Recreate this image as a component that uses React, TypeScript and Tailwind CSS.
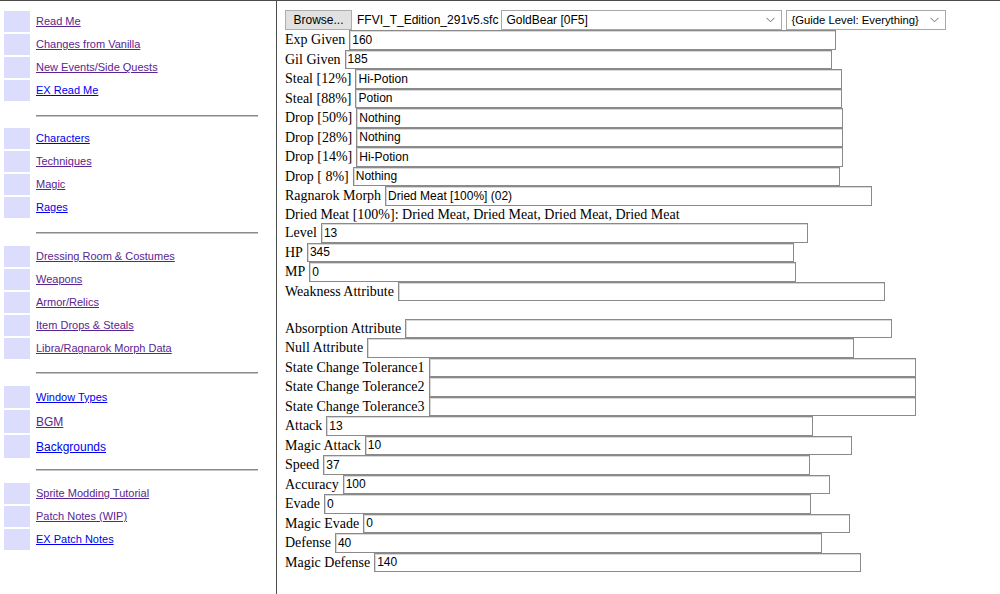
import React from "react";

type NavLink = { label: string; visited?: boolean; big?: boolean; h?: string };

const groups: NavLink[][] = [
  [
    { label: "Read Me", visited: true },
    { label: "Changes from Vanilla", visited: true },
    { label: "New Events/Side Quests", visited: true },
    { label: "EX Read Me" },
  ],
  [
    { label: "Characters" },
    { label: "Techniques", visited: true },
    { label: "Magic", visited: true },
    { label: "Rages" },
  ],
  [
    { label: "Dressing Room & Costumes", visited: true },
    { label: "Weapons", visited: true },
    { label: "Armor/Relics", visited: true },
    { label: "Item Drops & Steals", visited: true },
    { label: "Libra/Ragnarok Morph Data", visited: true },
  ],
  [
    { label: "Window Types", h: "h-[22px]" },
    { label: "BGM", visited: true, big: true, h: "h-[23px]" },
    { label: "Backgrounds", big: true, h: "h-[23px]" },
  ],
  [
    { label: "Sprite Modding Tutorial", visited: true },
    { label: "Patch Notes (WIP)", visited: true },
    { label: "EX Patch Notes" },
  ],
];

// spacing around each <hr>: [top, bottom]
const rules = [
  "mt-[14px] mb-[11px]",
  "mt-[14px] mb-[12px]",
  "mt-[13px] mb-[12px]",
  "mt-[11px] mb-[12px]",
];

type Row =
  | { kind: "input"; label: string; value?: string }
  | { kind: "text"; text: string };

const rows: Row[] = [
  { kind: "input", label: "Exp Given", value: "160" },
  { kind: "input", label: "Gil Given", value: "185" },
  { kind: "input", label: "Steal [12%]", value: "Hi-Potion" },
  { kind: "input", label: "Steal [88%]", value: "Potion" },
  { kind: "input", label: "Drop [50%]", value: "Nothing" },
  { kind: "input", label: "Drop [28%]", value: "Nothing" },
  { kind: "input", label: "Drop [14%]", value: "Hi-Potion" },
  { kind: "input", label: "Drop [\u00a08%]", value: "Nothing" },
  { kind: "input", label: "Ragnarok Morph", value: "Dried Meat [100%] (02)" },
  { kind: "text", text: "Dried Meat [100%]: Dried Meat, Dried Meat, Dried Meat, Dried Meat" },
  { kind: "input", label: "Level", value: "13" },
  { kind: "input", label: "HP", value: "345" },
  { kind: "input", label: "MP", value: "0" },
  { kind: "input", label: "Weakness Attribute" },
  { kind: "text", text: "" },
  { kind: "input", label: "Absorption Attribute" },
  { kind: "input", label: "Null Attribute" },
  { kind: "input", label: "State Change Tolerance1" },
  { kind: "input", label: "State Change Tolerance2" },
  { kind: "input", label: "State Change Tolerance3" },
  { kind: "input", label: "Attack", value: "13" },
  { kind: "input", label: "Magic Attack", value: "10" },
  { kind: "input", label: "Speed", value: "37" },
  { kind: "input", label: "Accuracy", value: "100" },
  { kind: "input", label: "Evade", value: "0" },
  { kind: "input", label: "Magic Evade", value: "0" },
  { kind: "input", label: "Defense", value: "40" },
  { kind: "input", label: "Magic Defense", value: "140" },
];

function Chevron() {
  return (
    <svg width="9" height="6" viewBox="0 0 9 6" className="shrink-0">
      <path d="M0.5 0.8 L4.5 4.8 L8.5 0.8" fill="none" stroke="#6d6d6d" strokeWidth="1" />
    </svg>
  );
}

function Select({ value, width, text }: { value: string; width: string; text: string }) {
  return (
    <div
      className={`flex h-[20px] items-center justify-between border border-[#a9a9a9] bg-white pl-[4px] pr-[6px] text-black ${text} ${width}`}
    >
      <span className="whitespace-nowrap">{value}</span>
      <Chevron />
    </div>
  );
}

function Sidebar() {
  return (
    <nav className="w-[277px] shrink-0 border-r border-[#4d4d4d] pt-[10px] pl-[4px] font-['Liberation_Sans',sans-serif]">
      {groups.map((group, gi) => (
        <div key={gi}>
          <div className="flex flex-col gap-[2px]">
            {group.map((link) => (
              <div key={link.label} className="flex items-center gap-[6px]">
                <div className={`w-[26px] bg-[#dcdcfc] ${link.h ?? "h-[21px]"}`} />
                <a
                  href="#"
                  className={`underline ${link.big ? "text-[12px]" : "text-[11px]"} ${
                    link.visited ? "text-[#5a2590]" : "text-[#0000ee]"
                  }`}
                >
                  {link.label}
                </a>
              </div>
            ))}
          </div>
          {gi < rules.length && (
            <div className={`ml-[32px] h-[2px] w-[222px] border-t border-[#8a8a8a] bg-[#c4c4c4] ${rules[gi]}`} />
          )}
        </div>
      ))}
    </nav>
  );
}

function Editor() {
  return (
    <main className="flex-1 pt-[9px] pl-[8px] font-['Liberation_Serif',serif] text-[14px] text-black">
      <div className="flex h-[20px] items-center font-['Liberation_Sans',sans-serif] text-[12px]">
        <button className="h-[20px] w-[67px] border border-[#adadad] bg-[#e1e1e1] text-[12px] text-black">
          Browse...
        </button>
        <span className="ml-[5px] mr-[3px]">FFVI_T_Edition_291v5.sfc</span>
        <Select value="GoldBear [0F5]" width="w-[281px]" text="text-[12px]" />
        <div className="w-[4px]" />
        <Select value="{Guide Level: Everything}" width="w-[160px]" text="text-[11.3px]" />
      </div>
      {rows.map((row, i) =>
        row.kind === "text" ? (
          <div key={i} className="flex h-[17.5px] items-center whitespace-nowrap">
            {row.text}
          </div>
        ) : (
          <div key={i} className="flex h-[19.5px] items-center whitespace-nowrap">
            <span>{row.label}</span>
            <input
              readOnly
              value={row.value ?? ""}
              className="ml-[4px] h-[19.5px] w-[487px] border border-[#8a8a8a] bg-white pl-[2px] font-['Liberation_Sans',sans-serif] text-[12px] text-black shadow-[inset_1px_1px_0_#d8d8d8] outline-none"
            />
          </div>
        )
      )}
    </main>
  );
}

export default function App() {
  return (
    <div className="flex h-[594px] w-[1000px] flex-col overflow-hidden bg-white">
      <div className="h-px w-full bg-[#4a4a4a]" />
      <div className="flex flex-1">
        <Sidebar />
        <Editor />
      </div>
    </div>
  );
}
